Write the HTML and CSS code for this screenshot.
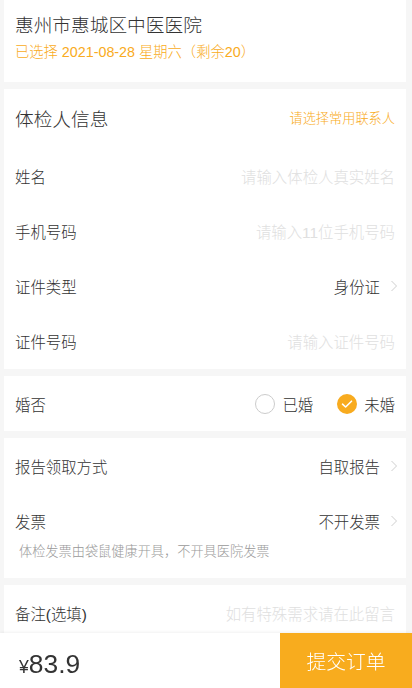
FILE: index.html
```html
<!DOCTYPE html>
<html lang="zh">
<head>
<meta charset="utf-8">
<title>提交订单</title>
<link rel="stylesheet" href="styles.css">
</head>
<body>
<div class="page">
  <section class="card hospital">
    <div class="hospital-name">惠州市惠城区中医医院</div>
    <div class="hospital-date">已选择 2021-08-28 星期六（剩余20）</div>
  </section>

  <section class="card person">
    <div class="person-head">
      <span class="person-title">体检人信息</span>
      <span class="person-pick">请选择常用联系人</span>
    </div>
    <div class="row"><span class="label">姓名</span><span class="placeholder">请输入体检人真实姓名</span></div>
    <div class="row"><span class="label">手机号码</span><span class="placeholder">请输入11位手机号码</span></div>
    <div class="row"><span class="label">证件类型</span><span class="value">身份证<svg class="chev" width="8" height="12" viewBox="0 0 8 12"><path d="M1.5 1 L6.5 6 L1.5 11" fill="none" stroke="#cfcfcf" stroke-width="1"/></svg></span></div>
    <div class="row"><span class="label">证件号码</span><span class="placeholder">请输入证件号码</span></div>
  </section>

  <section class="card">
    <div class="row">
      <span class="label">婚否</span>
      <span class="radios">
        <span class="radio"><span class="circle"></span>已婚</span>
        <span class="radio"><span class="circle on"><svg width="20" height="20" viewBox="0 0 20 20"><path d="M5.5 10.2 L8.6 13 L14.5 7.2" fill="none" stroke="#fff" stroke-width="1.6" stroke-linecap="round" stroke-linejoin="round"/></svg></span>未婚</span>
      </span>
    </div>
  </section>

  <section class="card report">
    <div class="row"><span class="label">报告领取方式</span><span class="value">自取报告<svg class="chev" width="8" height="12" viewBox="0 0 8 12"><path d="M1.5 1 L6.5 6 L1.5 11" fill="none" stroke="#cfcfcf" stroke-width="1"/></svg></span></div>
    <div class="row"><span class="label">发票</span><span class="value">不开发票<svg class="chev" width="8" height="12" viewBox="0 0 8 12"><path d="M1.5 1 L6.5 6 L1.5 11" fill="none" stroke="#cfcfcf" stroke-width="1"/></svg></span></div>
    <div class="note">体检发票由袋鼠健康开具，不开具医院发票</div>
  </section>

  <section class="card">
    <div class="row"><span class="label">备注(选填)</span><span class="placeholder">如有特殊需求请在此留言</span></div>
  </section>
</div>

<footer class="bar">
  <div class="price"><span class="yen">¥</span><span class="amount">83.9</span></div>
  <button class="submit">提交订单</button>
</footer>
</body>
</html>
```

FILE: styles.css
```css
* { box-sizing: border-box; }
html, body { margin: 0; padding: 0; }
body {
  background: #f6f6f6;
  font-family: "Liberation Sans", "Noto Sans CJK SC", sans-serif;
  font-weight: 300;
  color: #333;
  width: 412px;
  height: 688px;
  overflow: hidden;
}
.page {
  display: flex;
  flex-direction: column;
  gap: 7px;
  padding-bottom: 60px;
}
.card {
  background: #fff;
  margin-left: 4px;
  width: 402px;
}
.hospital {
  padding: 13px 11px 17px;
}
.hospital-name {
  font-size: 18.7px;
  line-height: 26px;
  color: #333;
}
.hospital-date {
  font-size: 14.3px;
  line-height: 26px;
  color: #f9ab22;
}
.person {
  padding-bottom: 1px;
}
.person-head {
  height: 59px;
  padding: 0 11px 2px;
  display: flex;
  align-items: center;
  justify-content: space-between;
}
.person-title {
  font-size: 18.7px;
  color: #333;
}
.person-pick {
  font-size: 13.2px;
  color: #f9ab22;
}
.row {
  height: 55px;
  padding: 0 11px;
  display: flex;
  align-items: center;
  justify-content: space-between;
  font-size: 15.4px;
}
.label { color: #333; }
.placeholder { color: #e0e0e0; }
.value {
  display: flex;
  align-items: center;
  color: #333;
}
.chev {
  margin-left: 10px;
  margin-right: -3px;
}
.radios {
  display: flex;
  align-items: center;
  gap: 24px;
}
.radio {
  display: flex;
  align-items: center;
  gap: 7px;
}
.circle {
  width: 20px;
  height: 20px;
  border-radius: 50%;
  border: 1px solid #cccccc;
  display: flex;
  align-items: center;
  justify-content: center;
}
.circle.on {
  border: none;
  background: #f8ab1f;
}
.note {
  margin-top: -5px;
  padding: 0 15px 17px;
  font-size: 13.2px;
  line-height: 18px;
  color: #999;
}
.bar {
  position: fixed;
  left: 0;
  right: 0;
  bottom: 0;
  height: 55px;
  background: #fff;
  display: flex;
  align-items: stretch;
  justify-content: space-between;
  box-shadow: 0 -1px 3px rgba(0,0,0,0.06);
}
.price {
  display: flex;
  align-items: baseline;
  padding-left: 19px;
  padding-top: 16px;
  color: #333;
}
.yen { font-size: 17.6px; }
.amount { font-size: 26.4px; }
.submit {
  width: 132px;
  border: none;
  margin: 0;
  background: #f8ac1e;
  color: #fff;
  font-family: "Liberation Sans", "Noto Sans CJK SC", sans-serif;
  font-weight: 300;
  font-size: 19.8px;
  padding: 0;
}
```
